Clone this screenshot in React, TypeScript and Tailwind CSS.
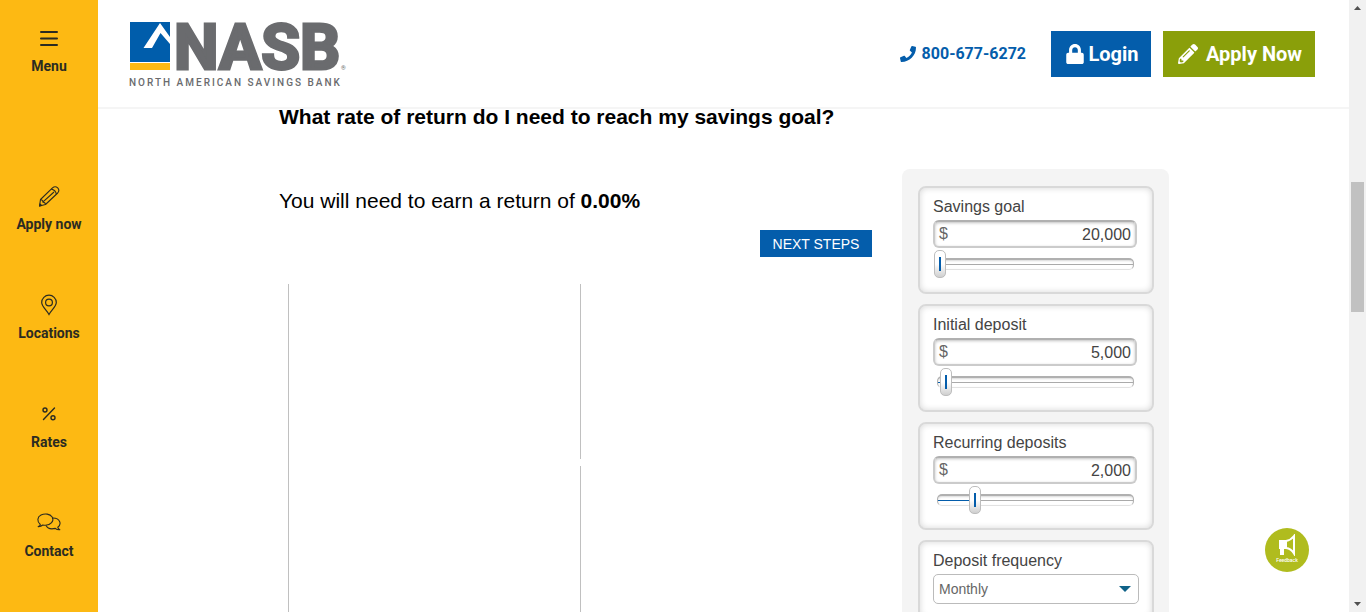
import React, { useState } from "react";
import { FaLock, FaPencilAlt, FaPhone } from "react-icons/fa";

const MenuIcon = () => (
  <svg viewBox="0 0 24 24" className="size-6" stroke="#2b2b22" strokeWidth="2" strokeLinecap="round">
    <path d="M4 6H20M4 12.500H20M4 19H20" />
  </svg>
);

const PencilIcon = () => (
  <svg viewBox="0 0 24 24" className="size-6" fill="none" stroke="#2b2b22" strokeWidth="1.1" strokeLinejoin="round">
    <path d="M2.500 22L3.500 15.500L15.500 3.900Q18.200 1.600 20.700 3.900Q23 6.400 20.700 9L8.500 20.500Z" />
    <path d="M14.300 5.100Q18.500 5.800 19.400 10.200M3.500 15.500Q6.200 16 6 18.300Q8.300 18.200 8.500 20.500M6.300 17.700L17 8M2.600 22L4.600 21.500L3 20Z" />
  </svg>
);

const PinIcon = () => (
  <svg viewBox="0 0 24 24" className="size-6" fill="none" stroke="#2b2b22" strokeWidth="1.200">
    <path d="M12 21.500C10 17.500 4.700 13.500 4.700 9.500A7.300 7.300 0 0 1 19.300 9.500C19.300 13.500 14 17.500 12 21.500Z" />
    <circle cx="12" cy="9.500" r="3.400" />
  </svg>
);

const PercentIcon = () => (
  <svg viewBox="0 0 24 24" className="size-6" fill="none" stroke="#2b2b22" strokeWidth="1.400" strokeLinecap="round">
    <path d="M17.500 6L6.500 17.500" />
    <circle cx="8" cy="8" r="2" />
    <circle cx="16" cy="15.800" r="2" />
  </svg>
);

const ChatIcon = () => (
  <svg viewBox="0 0 24 24" className="size-6" fill="none" stroke="#2b2b22" strokeWidth="1.100" strokeLinejoin="round">
    <path d="M3.300 13.500C-.3 10.500.2 6 4 4.100C8 2 13 3 15.200 6C17.500 10 13.500 14.300 8.500 14.300Q7 14.300 5.800 14Q4 15.700 1.200 15.600Q3.200 14.800 3.300 13.500Z" />
    <path d="M16 7C23 7.200 25 13 20.800 16.300Q21 17.700 22.800 18.800Q20 19 18.300 17.400C14.500 18.300 10.500 17.500 9 14.500" />
  </svg>
);

const navItems = [
  { label: "Apply now", Icon: PencilIcon },
  { label: "Locations", Icon: PinIcon },
  { label: "Rates", Icon: PercentIcon },
  { label: "Contact", Icon: ChatIcon },
];

function Sidebar() {
  return (
    <nav className="flex w-[98px] shrink-0 flex-col items-center bg-[#fdb913] pt-[26px] font-['Roboto',sans-serif] text-sm font-bold leading-5 text-[#2b2b22]">
      <button type="button" className="flex flex-col items-center gap-1.5">
        <MenuIcon />
        <span>Menu</span>
      </button>
      <ul className="mt-[108px] flex flex-col gap-[59px]">
        {navItems.map(({ label, Icon }) => (
          <li key={label}>
            <a href="#" className="flex flex-col items-center gap-1.5">
              <Icon />
              <span>{label}</span>
            </a>
          </li>
        ))}
      </ul>
    </nav>
  );
}

function Logo() {
  return (
    <a href="#" aria-label="NASB home" className="block">
      <svg viewBox="0 0 216 70" className="h-[70px] w-[216px] overflow-visible">
        <rect x="1" y="2" width="40" height="40" fill="#005dab" />
        <rect x="1" y="43" width="40" height="7" fill="#fdb913" />
        <path d="M14.500 28L31 3L41 17V24L31.500 13L23 28Z" fill="#fff" />
        <text x="45" y="49" fill="#6a6b6e" stroke="#6a6b6e" strokeWidth="3" fontFamily="Roboto, sans-serif" fontWeight="700" fontSize="63">NASB</text>
        <text x="212" y="50" fill="#6a6b6e" fontFamily="Roboto, sans-serif" fontSize="6">®</text>
        <text x="0" y="66" fill="#6a6b6e" fontFamily="Roboto, sans-serif" fontWeight="500" fontSize="10" letterSpacing="2">NORTH AMERICAN SAVINGS BANK</text>
      </svg>
    </a>
  );
}

function Header() {
  return (
    <header className="flex shrink-0 items-start justify-between border-b-2 border-[#f5f5f5] pb-[17px] pl-[31px] pr-[34px] pt-5 font-['Roboto',sans-serif]">
      <Logo />
      <div className="mt-[11px] flex items-center">
        <a href="#" className="mr-[25px] flex items-center gap-1.5 font-bold text-[#045dab]">
          <FaPhone className="size-4" />
          800-677-6272
        </a>
        <a href="#" className="mr-3 flex h-[46px] w-[100px] items-center justify-center gap-[3px] bg-[#045dab] pl-0.5 text-xl font-bold text-white">
          <FaLock className="size-5" />
          Login
        </a>
        <a href="#" className="flex h-[46px] w-[152px] items-center justify-center gap-2 bg-[#8a9f0a] pl-0.5 text-xl font-bold text-white">
          <FaPencilAlt className="size-5" />
          Apply Now
        </a>
      </div>
    </header>
  );
}

const cardClass =
  "rounded-lg border-2 border-[#d9d9d9] bg-white px-[13px] pb-3.5 pt-2 shadow-[inset_0_0_6px_rgba(0,0,0,0.16)]";

function AmountCard({ id, label, amount, start }: { id: string; label: string; amount: string; start: number }) {
  const [text, setText] = useState(amount);
  const [value, setValue] = useState(start);
  return (
    <div className={cardClass}>
      <label htmlFor={id} className="block leading-[22px]">
        {label}
      </label>
      <div className="mr-0.5 mt-0.5 flex h-7 items-center rounded-md border-2 border-[#cbcbcb] border-t-[#b0b0b0] bg-white px-1 shadow-[inset_0_1px_3px_rgba(0,0,0,0.25)]">
        <span className="text-[#666]">$</span>
        <input
          id={id}
          type="text"
          value={text}
          onChange={(e) => setText(e.target.value)}
          className="w-full min-w-0 bg-transparent pt-0.5 text-right outline-none"
        />
      </div>
      <div className="mt-0.5 grid h-7 items-center">
        <div className="col-start-1 row-start-1 ml-1 mr-[5px] flex h-3 items-center overflow-hidden rounded-[5px] border border-t-2 border-[#b0b0b0] border-b-[#e2e2e2] shadow-[inset_0_1px_2px_rgba(0,0,0,0.15)]">
          <div className="h-px bg-[#045dab]" style={{ width: `${value}%` }} />
          <div className="h-px flex-1 bg-[#aaa]" />
        </div>
        <input
          type="range"
          min={0}
          max={100}
          value={value}
          aria-label={`${label} slider`}
          onChange={(e) => setValue(Number(e.target.value))}
          className="col-start-1 row-start-1 ml-px h-7 appearance-none bg-transparent [&::-webkit-slider-thumb]:h-7 [&::-webkit-slider-thumb]:w-3 [&::-webkit-slider-thumb]:appearance-none [&::-webkit-slider-thumb]:rounded-[5px] [&::-webkit-slider-thumb]:border [&::-webkit-slider-thumb]:border-[#bdbdbd] [&::-webkit-slider-thumb]:bg-[linear-gradient(#045dab,#045dab),linear-gradient(#fff,#fff_50%,#cfcfcf)] [&::-webkit-slider-thumb]:bg-[length:2px_14px,100%_100%] [&::-webkit-slider-thumb]:bg-center [&::-webkit-slider-thumb]:bg-no-repeat"
        />
      </div>
    </div>
  );
}

function Calculator() {
  return (
    <main className="flex min-h-0 flex-1 pl-[17px] pr-4 font-['Liberation_Sans',Arial,sans-serif]">
      <div className="mx-auto flex w-full max-w-[890px] flex-col">
        <h1 className="text-[21px] font-bold leading-4 text-black">What rate of return do I need to reach my savings goal?</h1>
        <div className="mt-11 flex flex-1 gap-[30px]">
          <section className="flex flex-1 flex-col pt-5">
            <p className="text-[21px] leading-6 text-black">
              You will need to earn a return of <strong>0.00%</strong>
            </p>
            <button type="button" className="mt-[17px] h-[27px] w-28 self-end bg-[#045dab] text-sm leading-none text-white">
              NEXT STEPS
            </button>
            <div className="ml-[9px] mr-0.5 mt-[27px] grid flex-1 grid-cols-2 border-l border-[#c0c0c0]">
              <div className="col-start-2 flex flex-col gap-[7px]">
                <div className="h-[175px] border-l border-[#c0c0c0]" />
                <div className="flex-1 border-l border-[#c0c0c0]" />
              </div>
            </div>
          </section>
          <form className="flex w-[267px] shrink-0 flex-col gap-2.5 rounded-t-lg bg-[#f4f4f4] pl-4 pr-[15px] pt-[17px] text-[#444]">
            <AmountCard id="goal" label="Savings goal" amount="20,000" start={0} />
            <AmountCard id="initial" label="Initial deposit" amount="5,000" start={3} />
            <AmountCard id="recurring" label="Recurring deposits" amount="2,000" start={18} />
            <div className={cardClass}>
              <label htmlFor="frequency" className="block leading-[22px]">
                Deposit frequency
              </label>
              <div className="mt-0.5 grid items-center">
                <select
                  id="frequency"
                  defaultValue="Monthly"
                  className="col-start-1 row-start-1 h-[30px] w-full appearance-none rounded-[5px] border border-[#bbb] bg-white pl-[5px] text-sm text-[#666]"
                >
                  <option>Weekly</option>
                  <option>Monthly</option>
                  <option>Annually</option>
                </select>
                <svg viewBox="0 0 12 6" className="pointer-events-none col-start-1 row-start-1 mr-2 h-1.5 w-3 justify-self-end" fill="#0f6288">
                  <path d="M0 0H12L6 6Z" />
                </svg>
              </div>
            </div>
          </form>
        </div>
      </div>
    </main>
  );
}

function PageScrollbar() {
  return (
    <div aria-hidden="true" className="flex w-[17px] shrink-0 flex-col items-center bg-[#f1f1f1] py-1.5">
      <svg viewBox="0 0 7 4" className="h-1 w-[7px]" fill="#505050">
        <path d="M0 4H7L3.500 0Z" />
      </svg>
      <div className="flex w-full flex-1 flex-col items-center">
        <div className="basis-[29%]" />
        <div className="w-[13px] basis-[22%] bg-[#c1c1c1]" />
      </div>
      <svg viewBox="0 0 7 4" className="h-1 w-[7px]" fill="#505050">
        <path d="M0 0H7L3.500 4Z" />
      </svg>
    </div>
  );
}

export default function App() {
  return (
    <div className="flex h-screen overflow-hidden bg-white">
      <Sidebar />
      <div className="flex min-w-0 flex-1 flex-col">
        <Header />
        <Calculator />
      </div>
      <PageScrollbar />
      <button
        type="button"
        className="absolute bottom-10 right-[57px] flex size-11 flex-col items-center rounded-full bg-[#b0bc1e] pt-1.5 font-['Roboto',sans-serif] text-[5px] font-medium leading-[8px] text-white"
      >
        <svg viewBox="0 0 18 22" className="h-[22px] w-[18px]" fill="none" stroke="#fff" strokeWidth="2">
          <path d="M2 7H8V14H2Z" fill="#fff" />
          <path d="M2 14H6V21H2Z" fill="#fff" stroke="none" />
          <path d="M8 7Q13 6 16 2V19.500Q13 14.500 8 14" />
        </svg>
        Feedback
      </button>
    </div>
  );
}
